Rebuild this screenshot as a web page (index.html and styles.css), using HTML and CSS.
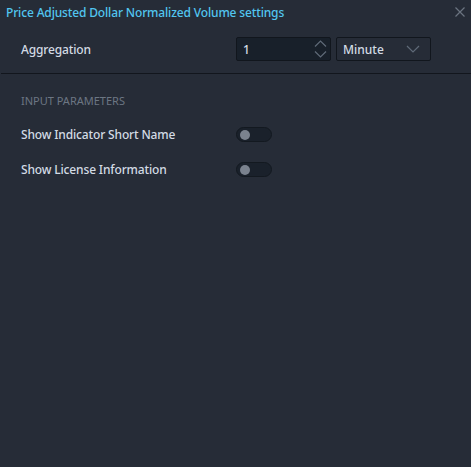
FILE: index.html
```html
<!DOCTYPE html>
<html>
<head>
<meta charset="utf-8">
<link rel="stylesheet" href="styles.css">
</head>
<body>
<div class="dialog">
  <div class="titlebar">
    <span class="title">Price Adjusted Dollar Normalized Volume settings</span>
    <svg class="close" width="10" height="10" viewBox="0 0 10 10"><path d="M0.5 0.5L9.5 9.5M9.5 0.5L0.5 9.5" stroke="#6b7480" stroke-width="1.2" fill="none"/></svg>
  </div>
  <div class="agg-row">
    <span class="label">Aggregation</span>
    <div class="controls">
      <div class="numinput">
        <span class="val">1</span>
        <svg class="spin" width="13" height="20" viewBox="0 0 13 20"><path d="M1 7.5L6.5 2L12 7.5M1 12.5L6.5 18L12 12.5" stroke="#5f6a78" stroke-width="1.2" fill="none"/></svg>
      </div>
      <div class="select">
        <span class="val">Minute</span>
        <svg class="chev" width="14" height="8" viewBox="0 0 14 8"><path d="M1 1L7 7L13 1" stroke="#5f6a78" stroke-width="1.2" fill="none"/></svg>
      </div>
    </div>
  </div>
  <div class="divider"></div>
  <div class="params">
    <div class="section">INPUT PARAMETERS</div>
    <div class="row">
      <span class="label">Show Indicator Short Name</span>
      <div class="toggle"><span class="knob"></span></div>
    </div>
    <div class="row">
      <span class="label">Show License Information</span>
      <div class="toggle"><span class="knob"></span></div>
    </div>
  </div>
</div>
</body>
</html>
```
FILE: styles.css
```css
html, body {
  margin: 0;
  padding: 0;
  background: #262c37;
  width: 471px;
  height: 467px;
  overflow: hidden;
  font-family: "Noto Sans", "Open Sans", sans-serif;
}
.dialog {
  display: flex;
  flex-direction: column;
}
.titlebar {
  height: 24px;
  display: flex;
  align-items: center;
  justify-content: space-between;
  padding: 0 5px 0 6px;
}
.title {
  color: #52c6f0;
  font-size: 12px;
  font-weight: 500;
  letter-spacing: -0.15px;
}
.close {
  margin-right: 1px;
}
.agg-row {
  display: flex;
  align-items: center;
  padding: 13px 0 12px 21px;
}
.label {
  color: #d3dbe4;
  font-size: 12px;
  font-weight: 500;
  letter-spacing: -0.15px;
}
.agg-row .label {
  width: 215px;
}
.controls {
  display: flex;
  gap: 5px;
}
.numinput, .select {
  box-sizing: border-box;
  width: 95px;
  height: 24px;
  border: 1px solid #11161d;
  border-radius: 2px;
  display: flex;
  align-items: center;
  justify-content: space-between;
  padding: 0 3px 0 6px;
}
.numinput {
  background: #18202a;
}
.select {
  background: #262c37;
  padding-right: 10px;
}
.val {
  color: #d3dbe4;
  font-size: 12px;
  font-weight: 500;
}
.divider {
  height: 1px;
  background: #12161d;
  margin-left: 1px;
}
.params {
  padding: 19px 0 0 21px;
}
.section {
  color: #6c7683;
  font-size: 11px;
  margin-bottom: 18px;
  height: 16px;
  line-height: 16px;
}
.row {
  display: flex;
  align-items: center;
  height: 15px;
  margin-bottom: 20px;
}
.row .label {
  width: 215px;
}
.toggle {
  box-sizing: border-box;
  width: 36px;
  height: 15px;
  border-radius: 8px;
  background: #1a212b;
  border: 1px solid #131920;
  position: relative;
}
.knob {
  position: absolute;
  left: 3px;
  top: 1.5px;
  width: 10px;
  height: 10px;
  border-radius: 50%;
  background: #7a828e;
}
```
